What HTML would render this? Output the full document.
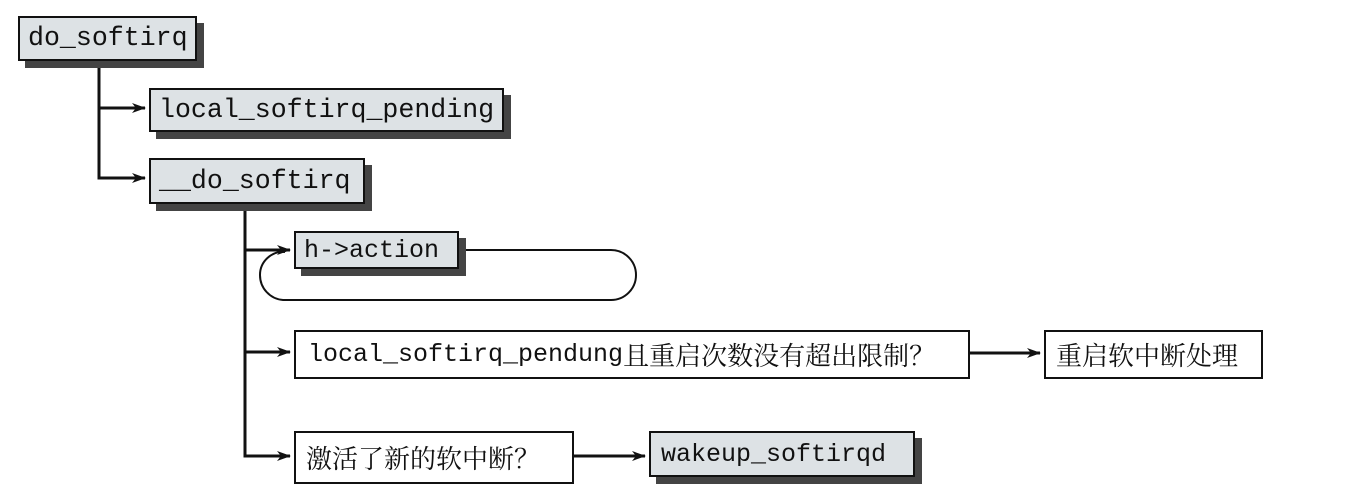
<!DOCTYPE html>
<html><head><meta charset="utf-8"><style>
body{margin:0;width:1369px;height:497px;background:#fff;position:relative;overflow:hidden}
.b{position:absolute;box-sizing:border-box;border:2px solid #111;background:#dde2e5;font-family:"Liberation Mono",monospace;font-size:26.6px;color:#111;line-height:1;display:flex;align-items:center;padding-left:8px;white-space:nowrap}
.s{position:absolute;background:#444}
.w{background:#fff;font-family:"Liberation Mono","Noto Serif CJK SC",serif;font-size:25px}
.cj{font-family:"Noto Serif CJK SC",serif;font-size:26px}
svg{position:absolute;left:0;top:0}
</style></head><body>
<svg width="1369" height="497">
<defs><marker id="a" markerWidth="14" markerHeight="10" refX="13" refY="5" orient="auto" markerUnits="userSpaceOnUse"><path d="M0,0 L14,5 L0,10 L4,5 Z" fill="#111"/></marker></defs>
<g stroke="#111" stroke-width="3" fill="none">
<path d="M99,61 V178 H145" marker-end="url(#a)"/>
<path d="M99,108 H145" marker-end="url(#a)"/>
<path d="M245,204 V456 H290" marker-end="url(#a)"/>
<path d="M245,250 H290" marker-end="url(#a)"/>
<path d="M245,352 H290" marker-end="url(#a)"/>
<path d="M574,456 H645" marker-end="url(#a)"/>
<path d="M970,353 H1040" marker-end="url(#a)"/>
</g>
<path d="M459,250 H611 A25,25 0 0 1 636,275 A25,25 0 0 1 611,300 H283 A25,25 0 0 1 260,275 A23,23 0 0 1 285,252" stroke="#111" stroke-width="2" fill="none"/>
</svg>
<div class="s" style="left:25px;top:23px;width:179px;height:45px"></div>
<div class="b" style="left:18px;top:16px;width:179px;height:45px">do_softirq</div>
<div class="s" style="left:156px;top:95px;width:355px;height:44px"></div>
<div class="b" style="left:149px;top:88px;width:355px;height:44px">local_softirq_pending</div>
<div class="s" style="left:156px;top:165px;width:216px;height:46px"></div>
<div class="b" style="left:149px;top:158px;width:216px;height:46px">__do_softirq</div>
<div class="s" style="left:301px;top:238px;width:165px;height:38px"></div>
<div class="b" style="left:294px;top:231px;width:165px;height:38px;font-size:25px">h-&gt;action</div>
<div class="b w" style="left:294px;top:330px;width:676px;height:49px;padding-left:12px">local_softirq_pendung<span class="cj">且重启次数没有超出限制？</span></div>
<div class="b w cj" style="left:1044px;top:330px;width:219px;height:49px;padding-left:10px">重启软中断处理</div>
<div class="b w cj" style="left:294px;top:431px;width:280px;height:53px;padding-left:10px">激活了新的软中断？</div>
<div class="s" style="left:656px;top:438px;width:266px;height:46px"></div>
<div class="b" style="left:649px;top:431px;width:266px;height:46px;padding-left:10px;font-size:25px">wakeup_softirqd</div>
</body></html>
